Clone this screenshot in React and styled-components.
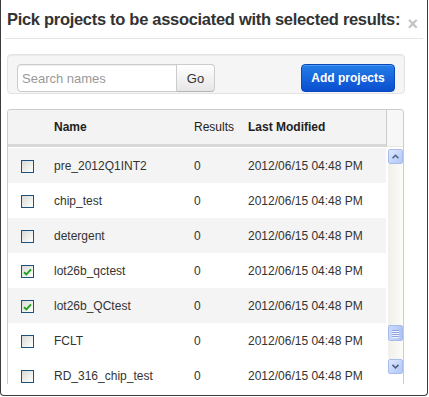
import React from 'react';
import styled, { createGlobalStyle } from 'styled-components';

const GlobalStyle = createGlobalStyle`
  html, body { margin: 0; padding: 0; background: #fff; }
  body { font-family: "Liberation Sans", Arial, sans-serif; color: #333; }
`;

const Dialog = styled.div`
  box-sizing: border-box;
  width: 428px;
  height: 396px;
  background: #fff;
  border: 1px solid #3c3c3c;
  border-top: none;
  border-radius: 0 0 4px 4px;
  padding: 0 6px;
  overflow: hidden;
`;

const Header = styled.div`
  display: flex;
  align-items: center;
  justify-content: space-between;
  height: 38px;
  margin: 0 -2px;
  padding: 0 5px 0 2px;
  border-bottom: 1px solid #e5e5e5;
`;

const Title = styled.h3`
  margin: 0;
  font-size: 16.5px;
  letter-spacing: -0.3px;
  line-height: 20px;
  font-weight: bold;
  color: #333;
  white-space: nowrap;
`;

const Close = styled.span`
  margin-top: 10px;
  font-size: 18px;
  line-height: 20px;
  font-weight: bold;
  color: #c2c2c2;
`;

const Toolbar = styled.div`
  box-sizing: border-box;
  width: 398px;
  height: 40px;
  margin-top: 15px;
  padding: 9px 9px 0;
  display: flex;
  align-items: flex-start;
  justify-content: space-between;
  background: #f5f5f5;
  border: 1px solid #e3e3e3;
  border-radius: 4px;
  box-shadow: inset 0 1px 1px rgba(0, 0, 0, 0.05);
`;

const SearchGroup = styled.div`
  display: flex;
`;

const SearchInput = styled.input`
  box-sizing: border-box;
  width: 160px;
  height: 28px;
  margin: 0;
  padding: 0 4px;
  border: 1px solid #ccc;
  border-radius: 4px 0 0 4px;
  font-family: "Liberation Sans", Arial, sans-serif;
  font-size: 13px;
  color: #555;
  background: #fff;
  box-shadow: inset 0 1px 1px rgba(0, 0, 0, 0.075);
  outline: none;
  &::placeholder { color: #999; }
`;

const GoButton = styled.button`
  box-sizing: border-box;
  width: 39px;
  height: 28px;
  margin: 0 0 0 -1px;
  padding: 0;
  border: 1px solid #ccc;
  border-bottom-color: #b3b3b3;
  border-radius: 0 4px 4px 0;
  background: linear-gradient(#ffffff, #e6e6e6);
  font-family: "Liberation Sans", Arial, sans-serif;
  font-size: 13px;
  color: #333;
`;

const PrimaryButton = styled.button`
  box-sizing: border-box;
  width: 94px;
  height: 28px;
  margin: 0;
  padding: 0;
  border: 1px solid #0b47bd;
  border-radius: 4px;
  background: linear-gradient(#237ee8, #0a4ecf);
  font-family: "Liberation Sans", Arial, sans-serif;
  font-size: 12px;
  font-weight: bold;
  color: #fff;
  box-shadow: inset 0 1px 0 rgba(255, 255, 255, 0.2);
`;

const Table = styled.div`
  box-sizing: border-box;
  width: 397px;
  margin-top: 15px;
  border: 1px solid #ccc;
  border-bottom: none;
  border-radius: 4px 4px 0 0;
  overflow: hidden;
`;

const HeadRow = styled.div`
  display: flex;
`;

const columns = '46px 140px 54px 1fr';

const HeadCells = styled.div`
  flex: 1;
  display: grid;
  grid-template-columns: ${columns};
  align-items: center;
  height: 34px;
  background: #f3f3f3;
  border-bottom: 3px solid #d8d8d8;
`;

const HeadCell = styled.div`
  font-size: 12px;
  font-weight: ${p => (p.$bold ? 'bold' : 'normal')};
  color: #222;
  white-space: nowrap;
`;

const ScrollCorner = styled.div`
  width: 16px;
  border-left: 1px solid #ccc;
  border-bottom: 1px solid #e6e6e6;
  background: #f7f7f7;
`;

const Body = styled.div`
  display: flex;
  height: 237px;
`;

const Viewport = styled.div`
  flex: 1;
  overflow: hidden;
  padding-top: 1px;
`;

const Row = styled.div`
  display: grid;
  grid-template-columns: ${columns};
  align-items: center;
  height: 35px;
  background: ${p => (p.$striped ? '#f4f4f4' : '#fff')};
`;

const Cell = styled.div`
  font-size: 12px;
  color: #333;
  white-space: nowrap;
  padding-top: 1px;
`;

const CheckCell = styled.div`
  display: flex;
  align-items: center;
  padding: 2px 0 0 13px;
`;

const CheckBox = styled.span`
  box-sizing: border-box;
  display: flex;
  align-items: center;
  justify-content: center;
  width: 13px;
  height: 13px;
  border: 1px solid #1c5180;
  background: linear-gradient(135deg, #d9d9d4 0%, #f4f4f2 70%, #ffffff 100%);
`;

const ScrollBar = styled.div`
  display: flex;
  flex-direction: column;
  width: 15px;
  padding: 2px 0 10px 2px;
`;

const ScrollButton = styled.div`
  box-sizing: border-box;
  display: flex;
  align-items: center;
  justify-content: center;
  width: 15px;
  height: 15px;
  border: 1px solid #a8bcec;
  border-radius: 2px;
  background: linear-gradient(135deg, #dfe8fe 0%, #c2d3fb 60%, #b4c8f5 100%);
`;

const Track = styled.div`
  flex: 1;
  display: flex;
  flex-direction: column;
  background: linear-gradient(90deg, #f1f0ea, #fbfbf8);
`;

const Thumb = styled.div`
  box-sizing: border-box;
  display: flex;
  flex-direction: column;
  align-items: center;
  justify-content: center;
  gap: 1px;
  width: 15px;
  height: 16px;
  margin-top: ${p => p.$offset}px;
  border: 1px solid #a8bcec;
  border-radius: 2px;
  background: linear-gradient(90deg, #c9d8fc 0%, #bccffa 60%, #adc3f3 100%);
`;

const Grip = styled.span`
  display: block;
  width: 7px;
  height: 1px;
  background: #8ea6dd;
  box-shadow: 0 1px 0 #eef3ff;
`;

const Check = () => (
  <svg width="9" height="8" viewBox="0 0 9 8">
    <path d="M1 4.2 L3.4 6.4 L8 1.4" fill="none" stroke="#21a321" strokeWidth="2" />
  </svg>
);

const Arrow = ({ up }) => (
  <svg width="7" height="5" viewBox="0 0 7 5">
    <path
      d={up ? 'M0.5 4.3 L3.5 1.3 L6.5 4.3' : 'M0.5 0.8 L3.5 3.8 L6.5 0.8'}
      fill="none"
      stroke="#4d6185"
      strokeWidth="1.6"
    />
  </svg>
);

const projects = [
  { name: 'pre_2012Q1INT2', checked: false },
  { name: 'chip_test', checked: false },
  { name: 'detergent', checked: false },
  { name: 'lot26b_qctest', checked: true },
  { name: 'lot26b_QCtest', checked: true },
  { name: 'FCLT', checked: false },
  { name: 'RD_316_chip_test', checked: false },
];

export default function App() {
  return (
    <>
      <GlobalStyle />
      <Dialog>
        <Header>
          <Title>Pick projects to be associated with selected results:</Title>
          <Close>×</Close>
        </Header>
        <Toolbar>
          <SearchGroup>
            <SearchInput placeholder="Search names" />
            <GoButton>Go</GoButton>
          </SearchGroup>
          <PrimaryButton>Add projects</PrimaryButton>
        </Toolbar>
        <Table>
          <HeadRow>
            <HeadCells>
              <span />
              <HeadCell $bold>Name</HeadCell>
              <HeadCell>Results</HeadCell>
              <HeadCell $bold>Last Modified</HeadCell>
            </HeadCells>
            <ScrollCorner />
          </HeadRow>
          <Body>
            <Viewport>
              {projects.map((p, i) => (
                <Row key={p.name} $striped={i % 2 === 0 && i < 6}>
                  <CheckCell>
                    <CheckBox>{p.checked && <Check />}</CheckBox>
                  </CheckCell>
                  <Cell>{p.name}</Cell>
                  <Cell>0</Cell>
                  <Cell>2012/06/15 04:48 PM</Cell>
                </Row>
              ))}
            </Viewport>
            <ScrollBar>
              <ScrollButton>
                <Arrow up />
              </ScrollButton>
              <Track>
                <Thumb $offset={161}>
                  <Grip />
                  <Grip />
                  <Grip />
                  <Grip />
                </Thumb>
              </Track>
              <ScrollButton>
                <Arrow />
              </ScrollButton>
            </ScrollBar>
          </Body>
        </Table>
      </Dialog>
    </>
  );
}
